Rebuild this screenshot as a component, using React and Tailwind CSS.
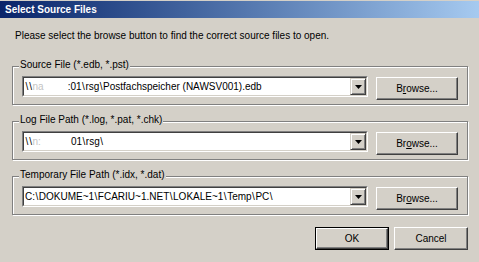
import React from "react";

function Path({ text }) {
  const parts = text.split("\\");
  const out = [];
  parts.forEach((p, i) => {
    if (i > 0) out.push(<span key={"b" + i} className="px-[0.5px]">\</span>);
    if (p) out.push(<span key={"t" + i}>{p}</span>);
  });
  return <>{out}</>;
}

function Combo({ children }) {
  return (
    <div className="w-[346px] h-[21px] border border-t-[#808080] border-l-[#808080] border-r-white border-b-white">
      <div className="w-full h-full bg-white border border-t-[#404040] border-l-[#404040] border-r-[#d4d0c8] border-b-[#d4d0c8] flex items-center">
        <div className="flex-1 pl-[1px] whitespace-nowrap overflow-hidden leading-[13px]">{children}</div>
        <div className="w-[16px] h-full bg-[#d4d0c8] border border-t-[#d4d0c8] border-l-[#d4d0c8] border-r-[#404040] border-b-[#404040] shadow-[inset_1px_1px_0_#fff,inset_-1px_-1px_0_#808080] flex items-center justify-center">
          <svg width="7" height="4" viewBox="0 0 7 4">
            <polygon points="0,0 7,0 3.5,4" fill="#000" />
          </svg>
        </div>
      </div>
    </div>
  );
}

function Btn({ children, def, className = "" }) {
  if (def) {
    return (
      <div className={"border border-black bg-[#d4d0c8] " + className}>
        <div className="w-full h-full border border-t-white border-l-white border-r-[#404040] border-b-[#404040] shadow-[inset_-1px_-1px_0_#808080] flex items-center justify-center leading-[13px]">
          {children}
        </div>
      </div>
    );
  }
  return (
    <div className={"bg-[#d4d0c8] border border-t-white border-l-white border-r-[#404040] border-b-[#404040] shadow-[inset_-1px_-1px_0_#808080] flex items-center justify-center leading-[13px] " + className}>
      {children}
    </div>
  );
}

function Group({ label, children, browse, className = "" }) {
  return (
    <div className={"relative ml-[12px] w-[456px] h-[39px] border border-[#808080] shadow-[inset_1px_1px_0_#fff,1px_1px_0_#fff] flex items-start pl-[9px] pt-[9px] " + className}>
      <div className="absolute left-[6px] top-[-9px] px-[1px] bg-[#d4d0c8] leading-[13px] whitespace-nowrap">{label}</div>
      <Combo>{children}</Combo>
      <Btn className="mt-[1px] ml-[8px] w-[82px] h-[23px]">{browse}</Btn>
    </div>
  );
}

export default function App() {
  return (
    <div className="w-[479px] h-[262px] bg-[#d4d0c8] flex flex-col font-['Liberation_Sans',Arial,sans-serif] text-[10px] text-black overflow-hidden">
      <div className="mt-px h-[17px] bg-linear-to-r from-[#0a246a] to-[#a6caf0] flex items-center pl-[5px] text-white font-bold text-[10px]">
        Select Source Files
      </div>
      <p className="ml-[15px] mt-[11px] leading-[13px]">
        Please select the browse button to find the correct source files to open.
      </p>
      <Group
        className="mt-[24px]"
        label="Source File (*.edb, *.pst)"
        browse={<span>B<u>r</u>owse...</span>}
      >
        <Path text={"\\\\"} />
        <span className="text-[#c4c4c4]">na</span>
        <span className="inline-block w-[24px]"></span>
        <Path text={":01\\rsg\\Postfachspeicher (NAWSV001).edb"} />
      </Group>
      <Group
        className="mt-[16px]"
        label="Log File Path (*.log, *.pat, *.chk)"
        browse={<span>Br<u>o</u>wse...</span>}
      >
        <Path text={"\\\\"} />
        <span className="text-[#c4c4c4]">n:</span>
        <span className="inline-block w-[30px]"></span>
        <Path text={"01\\rsg\\"} />
      </Group>
      <Group
        className="mt-[16px]"
        label="Temporary File Path (*.idx, *.dat)"
        browse={<span>Br<u>o</u>wse...</span>}
      >
        <Path text={"C:\\DOKUME~1\\FCARIU~1.NET\\LOKALE~1\\Temp\\PC\\"} />
      </Group>
      <div className="flex justify-end gap-[5px] mr-[11px] mt-[12px]">
        <Btn def className="w-[74px] h-[23px]">OK</Btn>
        <Btn className="w-[74px] h-[23px]">Cancel</Btn>
      </div>
    </div>
  );
}
